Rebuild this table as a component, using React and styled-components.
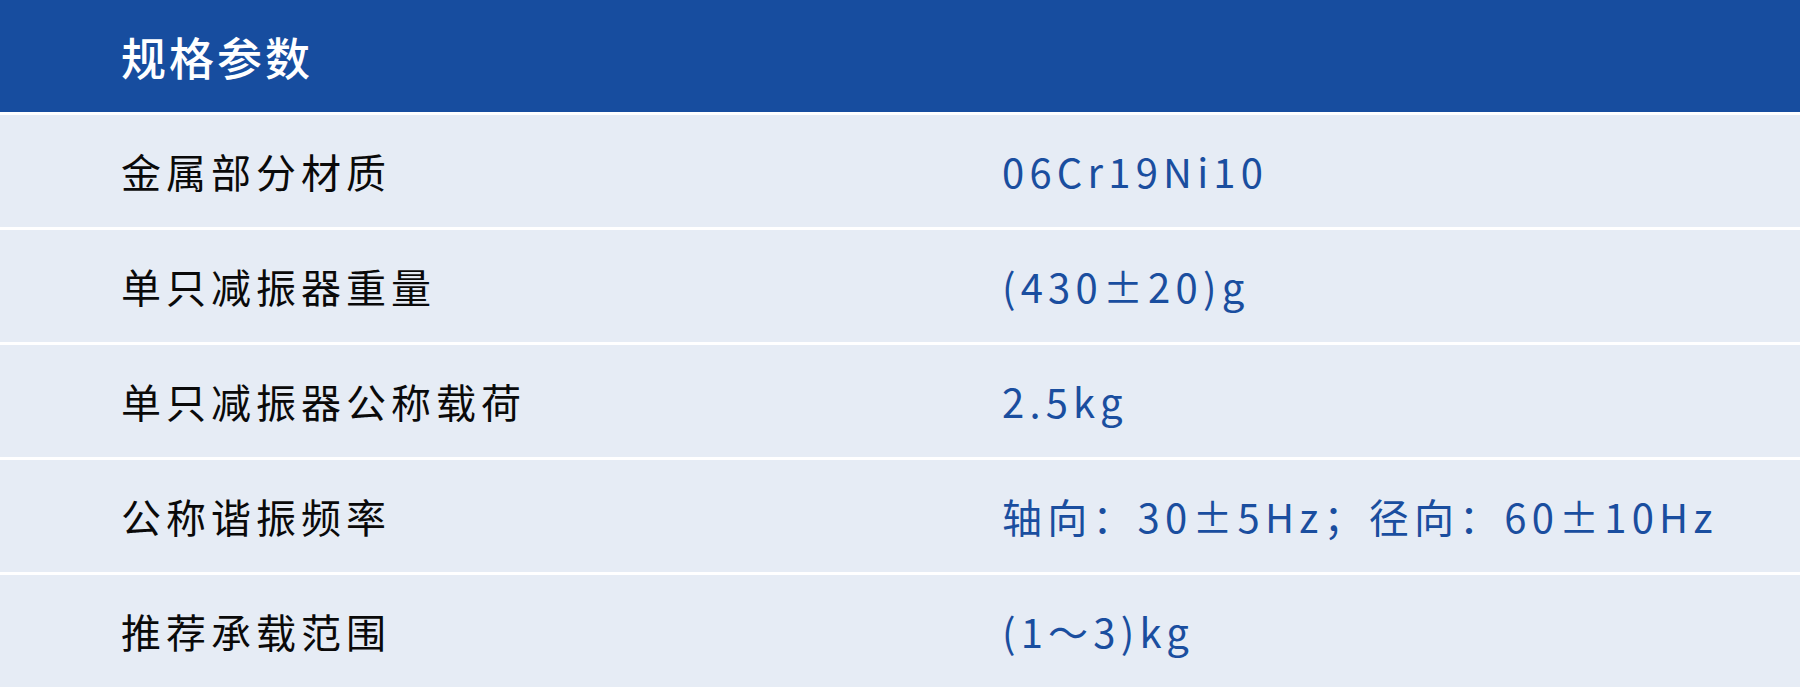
import React from 'react'
import styled, { createGlobalStyle } from 'styled-components'

const GlobalStyle = createGlobalStyle`
  html, body {
    margin: 0;
    padding: 0;
    background: #ffffff;
  }
  body {
    font-family: 'Noto Sans CJK SC', 'Noto Sans', sans-serif;
  }
`

const specs = [
  { label: '金属部分材质', value: '06Cr19Ni10' },
  { label: '单只减振器重量', value: '(430±20)g' },
  { label: '单只减振器公称载荷', value: '2.5kg' },
  { label: '公称谐振频率', value: '轴向：30±5Hz；径向：60±10Hz' },
  { label: '推荐承载范围', value: '(1～3)kg' },
]

function App() {
  return (
    <>
      <GlobalStyle />
      <Table>
        <Header>
          <HeaderTitle>规格参数</HeaderTitle>
        </Header>
        {specs.map((item) => (
          <Row key={item.label}>
            <Label>{item.label}</Label>
            <Value>{item.value}</Value>
          </Row>
        ))}
      </Table>
    </>
  )
}

const Table = styled.div`
  width: 1800px;
  height: 691px;
  display: flex;
  flex-direction: column;
  gap: 3px;
  background: #ffffff;
  box-sizing: border-box;
`

const Header = styled.div`
  height: 112px;
  flex-shrink: 0;
  background: #174d9f;
  display: flex;
  align-items: center;
  padding-left: 121px;
`

const HeaderTitle = styled.h2`
  margin: 0;
  color: #ffffff;
  font-size: 45px;
  font-weight: 500;
  letter-spacing: 3px;
  line-height: 1;
`

const Row = styled.div`
  height: 112px;
  flex-shrink: 0;
  background: #e6ecf5;
  display: grid;
  grid-template-columns: 881px 1fr;
  align-items: center;
  padding-left: 121px;
`

const Label = styled.span`
  color: #0a0a0a;
  font-size: 40px;
  font-weight: 400;
  letter-spacing: 5px;
  line-height: 1;
`

const Value = styled.span`
  color: #1a4e9f;
  font-size: 40px;
  font-weight: 400;
  letter-spacing: 5.2px;
  line-height: 1;
`

export default App
